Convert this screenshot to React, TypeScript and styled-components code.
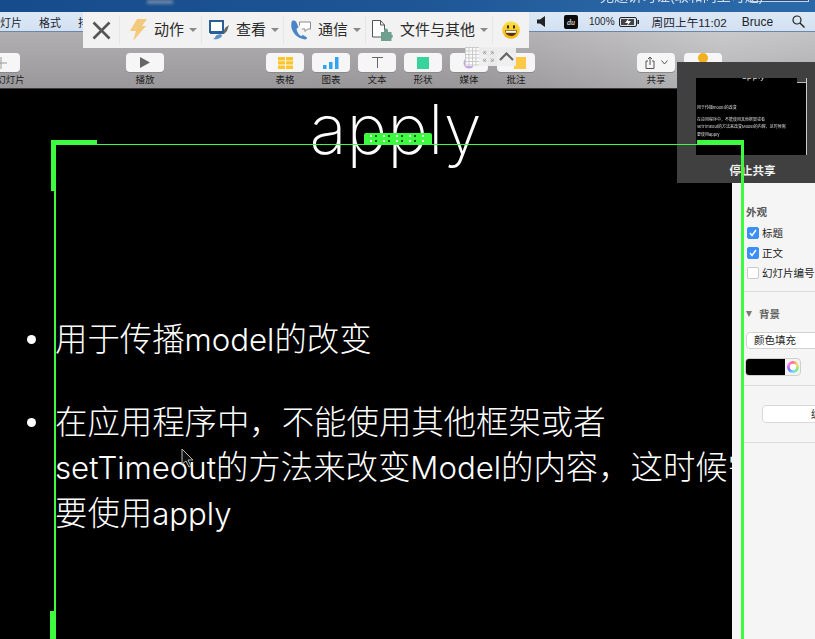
import React from "react";
import styled, { createGlobalStyle } from "styled-components";

const CJK = `"Liberation Sans", "Noto Sans CJK SC", sans-serif`;
const LIGHT = `Inter, "Noto Sans CJK SC", sans-serif`;
const GREEN = "#3dfb3f";

const Global = createGlobalStyle`
  html, body { margin: 0; padding: 0; background: #000; }
  #root { width: 815px; height: 639px; }
`;

const Screen = styled.div`
  position: relative;
  width: 815px;
  height: 639px;
  overflow: hidden;
  display: flex;
  flex-direction: column;
  font-family: ${CJK};
  background: #000;
`;

const TitleBar = styled.div`
  height: 12px;
  flex: none;
  background: linear-gradient(90deg, #174c8c 0%, #1d5595 50%, #2a66a5 80%, #2a68a8 100%);
  display: flex;
  align-items: flex-start;
  overflow: hidden;
`;
const TitleGlow = styled.div`
  width: 26px;
  height: 4px;
  margin-left: 147px;
  background: #6f86a6;
  filter: blur(1.5px);
  flex: none;
`;
const TitleText = styled.div`
  font-size: 14px;
  line-height: 14px;
  margin: -11px 0 0 427px;
  color: #d5dfeb;
  filter: blur(0.4px);
  white-space: nowrap;
  flex: none;
  width: 140px;
`;
const SearchEdge = styled.div`
  width: 59px;
  height: 2px;
  margin-left: 10px;
  box-sizing: border-box;
  border: 1px solid #c9d4e2;
  border-top: 0;
  background: #1f4f85;
  flex: none;
`;

const MenuBar = styled.div`
  height: 20px;
  flex: none;
  background: linear-gradient(180deg, #dce8f5, #d2e1f2);
  border-bottom: 1px solid #6d85a6;
  box-sizing: border-box;
  display: flex;
  align-items: center;
  color: #1d2530;
`;
const MenuItem = styled.span<{ $ml?: number; $size?: number }>`
  margin-left: ${(p) => p.$ml ?? 0}px;
  white-space: nowrap;
  font-size: ${(p) => p.$size ?? 11}px;
`;

const Toolbar = styled.div`
  height: 57px;
  flex: none;
  box-sizing: border-box;
  background: linear-gradient(180deg, rgba(255, 255, 255, 0.09), rgba(0, 0, 0, 0.09)),
    linear-gradient(100deg, #a9a7a9 0%, #a8a6a8 60%, #c4c3c5 88%, #bdbcbe 100%);
  border-bottom: 1px solid #3c3c3c;
  padding-top: 21px;
  display: flex;
  align-items: flex-start;
`;
const ToolItem = styled.div<{ $ml: number }>`
  width: 38px;
  flex: none;
  margin-left: ${(p) => p.$ml}px;
  display: flex;
  flex-direction: column;
  align-items: center;
`;
const ToolButton = styled.div`
  width: 38px;
  height: 19px;
  border-radius: 4px;
  background: #f6f6f6;
  box-shadow: 0 1px 0 #8b8a8b;
  display: flex;
  align-items: center;
  justify-content: center;
  gap: 3px;
`;
const ToolLabel = styled.div`
  font-size: 9.5px;
  line-height: 10px;
  margin-top: 3px;
  color: #1c1c1c;
  white-space: nowrap;
`;

const Main = styled.div`
  flex: 1;
  display: flex;
  min-height: 0;
`;
const Stage = styled.div`
  width: 732px;
  flex: none;
  background: #000;
  color: #fff;
  font-family: ${LIGHT};
  font-weight: 300;
  overflow: hidden;
`;
const SlideTitle = styled.h1`
  margin: 0;
  padding-left: 59px;
  text-align: center;
  font-size: 69px;
  line-height: 80px;
  font-weight: 200;
  height: 80px;
`;
const Bullets = styled.ul`
  list-style: none;
  margin: 148px 0 0;
  padding: 0 0 0 24px;
`;
const Bullet = styled.li`
  position: relative;
  padding-left: 31px;
  font-size: 32.4px;
  line-height: 45px;
  margin-bottom: 37px;
  width: 720px;
  white-space: nowrap;
  &::before {
    content: "";
    display: block;
    position: absolute;
    left: 3px;
    top: 18px;
    width: 9px;
    height: 9px;
    border-radius: 50%;
    background: #fff;
  }
`;
const Latin = styled.span`
  font-size: 31.2px;
`;

const Panel = styled.aside`
  flex: 1;
  background: #f5f5f5;
  padding-top: 116px;
  font-size: 10.5px;
  color: #222;
  overflow: hidden;
  white-space: nowrap;
`;
const PanelHeading = styled.div`
  margin-left: 14px;
  font-weight: 700;
  color: #555;
  line-height: 14px;
`;
const CheckRow = styled.div<{ $mt: number }>`
  display: flex;
  align-items: center;
  gap: 3px;
  margin: ${(p) => p.$mt}px 0 0 15px;
  height: 13px;
`;
const Check = styled.span<{ $on?: boolean }>`
  width: 12px;
  height: 12px;
  flex: none;
  box-sizing: border-box;
  border-radius: 2px;
  background: ${(p) => (p.$on ? "#3b8ff5" : "#fff")};
  border: 1px solid ${(p) => (p.$on ? "#3b8ff5" : "#c9c9c9")};
  display: flex;
`;
const Divider = styled.div<{ $mt: number }>`
  height: 1px;
  background: #dcdcdc;
  margin: ${(p) => p.$mt}px 0 0 11px;
`;
const SectionHead = styled.div`
  display: flex;
  align-items: center;
  gap: 7px;
  margin: 15px 0 0 14px;
  font-weight: 700;
  color: #666;
  line-height: 14px;
`;
const Triangle = styled.span`
  width: 0;
  height: 0;
  border-left: 3.5px solid transparent;
  border-right: 3.5px solid transparent;
  border-top: 6px solid #777;
`;
const SelectBox = styled.div`
  box-sizing: border-box;
  height: 17px;
  margin: 11px -6px 0 14px;
  border: 1px solid #d2d2d2;
  border-radius: 4px;
  background: #fff;
  padding-left: 7px;
  line-height: 15px;
`;
const Well = styled.div`
  box-sizing: border-box;
  width: 56px;
  height: 18px;
  margin: 9px 0 0 13px;
  border: 1px solid #cfcfcf;
  border-radius: 4px;
  background: #f3f3f3;
  display: flex;
  align-items: center;
  overflow: hidden;
`;
const WellColor = styled.span`
  width: 40px;
  height: 18px;
  margin-left: -1px;
  background: #000;
  flex: none;
`;
const Wheel = styled.span`
  width: 12px;
  height: 12px;
  margin-left: 2px;
  box-sizing: border-box;
  border-radius: 50%;
  background: radial-gradient(circle, #fff 0 38%, transparent 42%),
    conic-gradient(#f77, #fd7, #7e7, #7df, #77f, #f7f, #f77);
`;
const WideButton = styled.div`
  box-sizing: border-box;
  height: 18px;
  margin: 19px -6px 0 30px;
  border: 1px solid #d8d8d8;
  border-radius: 4px;
  background: #fff;
  padding-left: 48px;
  line-height: 16px;
`;

/* Overlays */
const ConfBar = styled.div`
  position: absolute;
  left: 83px;
  top: 12px;
  width: 446px;
  height: 36px;
  background: #f2f2f2;
  display: flex;
  align-items: center;
  z-index: 5;
`;
const ConfCell = styled.div<{ $w: number; $pl: number }>`
  width: ${(p) => p.$w}px;
  height: 100%;
  flex: none;
  box-sizing: border-box;
  padding-left: ${(p) => p.$pl}px;
  display: flex;
  align-items: center;
  gap: 6px;
  position: relative;
  &:not(:last-child)::after {
    content: "";
    position: absolute;
    right: 0;
    top: 4px;
    bottom: 4px;
    width: 1px;
    background: #e6e6e6;
  }
`;
const ConfText = styled.span`
  font-size: 15px;
  margin-bottom: 3px;
  color: #2b2b2b;
  white-space: nowrap;
`;
const Caret = styled.span`
  width: 0;
  height: 0;
  margin-left: -1px;
  border-left: 4px solid transparent;
  border-right: 4px solid transparent;
  border-top: 4px solid #8a8a8a;
`;
const MiniBar = styled.div`
  position: absolute;
  left: 465px;
  top: 47px;
  width: 51px;
  height: 19px;
  background: rgba(238, 238, 238, 0.95);
  display: flex;
  align-items: center;
  z-index: 6;
`;
const GridHandle = styled.div`
  width: 14px;
  height: 19px;
  flex: none;
  background-color: #fafafa;
  background-image: linear-gradient(90deg, #c8c8c8 1px, transparent 1px),
    linear-gradient(#c8c8c8 1px, transparent 1px);
  background-size: 3.5px 3.5px;
`;
const ShareWin = styled.div`
  position: absolute;
  left: 677px;
  top: 62px;
  width: 138px;
  height: 121px;
  background: #404040;
  box-sizing: border-box;
  padding: 16px 0 0 19px;
  z-index: 3;
`;
const Preview = styled.div`
  width: 111px;
  height: 77px;
  background: #000;
  color: #ddd;
  font-family: ${LIGHT};
  font-size: 4px;
  line-height: 7.5px;
  position: relative;
  overflow: hidden;
  border-right: 1px solid #ccc;
  box-sizing: border-box;
`;
const PreviewTitle = styled.div`
  text-align: center;
  font-size: 9px;
  line-height: 8px;
  margin-top: -6px;
  padding-left: 5px;
`;
const PreviewLine = styled.div<{ $mt?: number }>`
  padding-left: 1px;
  margin-top: ${(p) => p.$mt ?? 0}px;
  white-space: nowrap;
  filter: blur(0.25px);
`;
const PreviewNotch = styled.div`
  position: absolute;
  right: -1px;
  top: 0;
  width: 10px;
  height: 5px;
  background: #404040;
  border-bottom: 1px solid #bbb;
  box-sizing: border-box;
`;
const StopLabel = styled.div`
  margin: 9px 0 0 -19px;
  text-align: center;
  padding-left: 13px;
  color: #f0f0f0;
  font-size: 11.5px;
  font-weight: 700;
  line-height: 14px;
`;

const GreenBar = styled.div<{ $l: number; $t: number; $w: number; $h: number }>`
  position: absolute;
  left: ${(p) => p.$l}px;
  top: ${(p) => p.$t}px;
  width: ${(p) => p.$w}px;
  height: ${(p) => p.$h}px;
  background: ${GREEN};
  z-index: 4;
`;
const Grip = styled.div`
  position: absolute;
  left: 364px;
  top: 133px;
  width: 68px;
  height: 12px;
  border-radius: 2px 2px 0 0;
  background: ${GREEN};
  display: flex;
  align-items: center;
  justify-content: center;
  z-index: 4;
`;
const Cursor = styled.svg`
  position: absolute;
  left: 181px;
  top: 448px;
  z-index: 6;
`;

const Lightning = () => (
  <svg width="19" height="22" viewBox="0 0 19 22">
    <path d="M8 0h10l-5 7h4L4 22l3-10H1z" fill="#f3c97c" />
  </svg>
);
const Monitor = () => (
  <svg width="21" height="20" viewBox="0 0 21 20">
    <rect x="1" y="1" width="13" height="11" fill="#fff" stroke="#2a5f97" strokeWidth="2" />
    <path d="M1 12h14v2H1z" fill="#2a5f97" />
    <path d="M4 19c2 0 2-3 4-4 2-1 4-1 5 0 0 3-5 5-9 4z" fill="#5b8fc6" />
    <path d="M14 13l2-5 4-3-2 6-3 3z" fill="#666" />
  </svg>
);
const Phone = () => (
  <svg width="22" height="20" viewBox="0 0 22 20">
    <path d="M2 1C-1 9 5 18 15 19.500c1.500 0 2-1 2-2l-4-2.500-2 1c-2-1-4-4-4.500-7L8.500 7 6 1.500C5 .500 3 .300 2 1z" fill="#4a86c5" />
    <path d="M9.500 5.500V2h11v7h-3l-2.500 2.500V9H12" fill="#fff" stroke="#8a8a8a" />
  </svg>
);
const FileIcon = () => (
  <svg width="22" height="21" viewBox="0 0 22 21">
    <path d="M.5.500h8l4 4.500v12H.500z" fill="#fff" stroke="#555" />
    <path d="M8.500.500V5h4" fill="none" stroke="#555" />
    <path d="M9 12h3v-1.500a2 2 0 0 1 4 0V12h3.500v2.500a1.800 1.800 0 0 1 0 3.500V21H9z" fill="#6f9f8d" />
  </svg>
);
const Smiley = () => (
  <svg width="18" height="18" viewBox="0 0 18 18" style={{ marginLeft: -1 }}>
    <defs>
      <linearGradient id="smile" x1="0" y1="0" x2="0" y2="1">
        <stop offset="0" stopColor="#fde24a" />
        <stop offset="1" stopColor="#f5b50f" />
      </linearGradient>
    </defs>
    <circle cx="9" cy="9" r="8.800" fill="url(#smile)" />
    <ellipse cx="6" cy="5.800" rx="1.100" ry="1.900" fill="#3a2a10" />
    <ellipse cx="12" cy="5.800" rx="1.100" ry="1.900" fill="#3a2a10" />
    <path d="M3 9.500h12c0 3.500-3 5.500-6 5.500s-6-2-6-5.500z" fill="#5a3510" />
    <path d="M3.800 10h10.400v1.800H3.800z" fill="#fff" />
  </svg>
);
const TableGlyph = () => (
  <svg width="15" height="12" viewBox="0 0 15 12">
    <path d="M0 0h7v3.400H0zM8 0h7v3.400H8zM0 4.200h7v3.400H0zM8 4.200h7v3.400H8zM0 8.400h7V12H0zM8 8.400h7V12H8z" fill="#fdc52c" />
  </svg>
);
const ChartGlyph = () => (
  <svg width="16" height="12" viewBox="0 0 16 12">
    <path d="M0 8h3.500v4H0zM6 5h3.500v7H6zM12 0h3.500v12H12z" fill="#2fa4ef" />
  </svg>
);
const GripDots = () => (
  <svg width="56" height="8" viewBox="0 0 56 8">
    {[0, 5, 13, 18, 26, 31, 39, 44, 52].map((x) => (
      <g key={x}>
        <rect x={x} y="0" width="2" height="2" fill={x % 13 === 0 ? "#eaffea" : "#0d5a10"} />
        <rect x={x} y="5" width="2" height="2" fill={x % 13 === 0 ? "#eaffea" : "#0d5a10"} />
      </g>
    ))}
  </svg>
);
const Tick = () => (
  <svg width="10" height="10" viewBox="0 0 10 10">
    <path d="M2 5l2 2.500L8 2" fill="none" stroke="#fff" strokeWidth="1.400" />
  </svg>
);

export default function App() {
  return (
    <Screen>
      <Global />
      <TitleBar>
        <TitleGlow />
        <TitleText>无题讲习证(取和同上可题)</TitleText>
        <SearchEdge />
      </TitleBar>
      <MenuBar>
        <MenuItem>灯片</MenuItem>
        <MenuItem $ml={17}>格式</MenuItem>
        <MenuItem $ml={17}>排列</MenuItem>
        <svg width="8" height="11" viewBox="0 0 8 11" style={{ marginLeft: 437 }}>
          <path d="M0 3.500h3l5-3.500v11L3 7.500H0z" fill="#222" />
        </svg>
        <svg width="14" height="14" viewBox="0 0 14 14" style={{ marginLeft: 19 }}>
          <rect width="14" height="14" rx="2" fill="#0c0c0c" />
          <text x="7" y="10" fontSize="8" fill="#fff" textAnchor="middle" fontStyle="italic" fontFamily="Liberation Serif">du</text>
        </svg>
        <MenuItem $ml={11} $size={10}>100%</MenuItem>
        <svg width="20" height="10" viewBox="0 0 20 10" style={{ marginLeft: 4 }}>
          <rect x="0.500" y="0.500" width="17" height="9" rx="1.500" fill="none" stroke="#222" />
          <path d="M2 2h13v6H2z" fill="#444" />
          <path d="M10 1L6 6h3L8 9l4-5H9z" fill="#fff" />
          <rect x="18.500" y="3" width="1.500" height="4" fill="#222" />
        </svg>
        <MenuItem $ml={13} $size={11.700}>周四上午11:02</MenuItem>
        <MenuItem $ml={15} $size={12}>Bruce</MenuItem>
        <svg width="13" height="13" viewBox="0 0 13 13" style={{ marginLeft: 19 }}>
          <circle cx="5" cy="5" r="4" fill="none" stroke="#222" strokeWidth="1.200" />
          <path d="M8 8l4.500 4.500" stroke="#222" strokeWidth="1.400" />
        </svg>
      </MenuBar>
      <Toolbar>
        <ToolItem $ml={-18}>
          <ToolButton>
            <svg width="12" height="12" viewBox="0 0 12 12">
              <path d="M5.500 0h1v5.500H12v1H6.500V12h-1V6.500H0v-1h5.500z" fill="#999" />
            </svg>
          </ToolButton>
          <ToolLabel>添加幻灯片</ToolLabel>
        </ToolItem>
        <ToolItem $ml={106}>
          <ToolButton>
            <svg width="10" height="11" viewBox="0 0 10 11">
              <path d="M0 0l10 5.500L0 11z" fill="#666" />
            </svg>
          </ToolButton>
          <ToolLabel>播放</ToolLabel>
        </ToolItem>
        <ToolItem $ml={102}>
          <ToolButton><TableGlyph /></ToolButton>
          <ToolLabel>表格</ToolLabel>
        </ToolItem>
        <ToolItem $ml={8}>
          <ToolButton><ChartGlyph /></ToolButton>
          <ToolLabel>图表</ToolLabel>
        </ToolItem>
        <ToolItem $ml={8}>
          <ToolButton>
            <svg width="11" height="11" viewBox="0 0 11 11">
              <path d="M0 0h11v1H6v10H5V1H0z" fill="#666" />
            </svg>
          </ToolButton>
          <ToolLabel>文本</ToolLabel>
        </ToolItem>
        <ToolItem $ml={8}>
          <ToolButton>
            <svg width="12" height="12" viewBox="0 0 12 12"><rect width="12" height="12" fill="#37d39c" /></svg>
          </ToolButton>
          <ToolLabel>形状</ToolLabel>
        </ToolItem>
        <ToolItem $ml={8}>
          <ToolButton>
            <svg width="12" height="12" viewBox="0 0 12 12"><circle cx="6" cy="6" r="5.500" fill="#c9a6e8" /></svg>
          </ToolButton>
          <ToolLabel>媒体</ToolLabel>
        </ToolItem>
        <ToolItem $ml={9}>
          <ToolButton>
            <svg width="12" height="12" viewBox="0 0 12 12" style={{ marginLeft: 8 }}><rect width="12" height="12" fill="#fbc945" /></svg>
          </ToolButton>
          <ToolLabel>批注</ToolLabel>
        </ToolItem>
        <ToolItem $ml={102}>
          <ToolButton>
            <svg width="10" height="13" viewBox="0 0 10 13">
              <path d="M3 5H1v7.500h8V5H7M5 9V1M3 3l2-2 2 2" fill="none" stroke="#555" />
            </svg>
            <svg width="7" height="5" viewBox="0 0 7 5" style={{ marginLeft: 3 }}>
              <path d="M.5.500L3.500 4 6.500.500" fill="none" stroke="#555" />
            </svg>
          </ToolButton>
          <ToolLabel>共享</ToolLabel>
        </ToolItem>
        <ToolItem $ml={9}>
          <ToolButton>
            <svg width="10" height="10" viewBox="0 0 10 10" style={{ marginTop: -9 }}><circle cx="5" cy="5" r="5" fill="#f2b01e" /></svg>
          </ToolButton>
        </ToolItem>
      </Toolbar>
      <Main>
        <Stage>
          <SlideTitle>apply</SlideTitle>
          <Bullets>
            <Bullet>用于传播<Latin>model</Latin>的改变</Bullet>
            <Bullet>
              在应用程序中，不能使用其他框架或者
              <br />
              <Latin>setTimeout</Latin>的方法来改变<Latin>Model</Latin>的内容，这时候需
              <br />
              要使用<Latin>apply</Latin>
            </Bullet>
          </Bullets>
        </Stage>
        <Panel>
          <PanelHeading>外观</PanelHeading>
          <CheckRow $mt={7}>
            <Check $on><Tick /></Check>
            标题
          </CheckRow>
          <CheckRow $mt={7}>
            <Check $on><Tick /></Check>
            正文
          </CheckRow>
          <CheckRow $mt={7}>
            <Check />
            幻灯片编号
          </CheckRow>
          <Divider $mt={12} />
          <SectionHead>
            <Triangle />
            背景
          </SectionHead>
          <SelectBox>颜色填充</SelectBox>
          <Well>
            <WellColor />
            <Wheel />
          </Well>
          <Divider $mt={9} />
          <WideButton>编辑</WideButton>
          <Divider $mt={19} />
        </Panel>
      </Main>

      <ConfBar>
        <ConfCell $w={37} $pl={9}>
          <svg width="19" height="19" viewBox="0 0 19 19">
            <path d="M1.500 1.500l16 16M17.500 1.500l-16 16" stroke="#555" strokeWidth="2.600" />
          </svg>
        </ConfCell>
        <ConfCell $w={82} $pl={9}>
          <Lightning />
          <ConfText>动作</ConfText>
          <Caret />
        </ConfCell>
        <ConfCell $w={82} $pl={7}>
          <Monitor />
          <ConfText>查看</ConfText>
          <Caret />
        </ConfCell>
        <ConfCell $w={82} $pl={6}>
          <Phone />
          <ConfText>通信</ConfText>
          <Caret />
        </ConfCell>
        <ConfCell $w={127} $pl={6}>
          <FileIcon />
          <ConfText>文件与其他</ConfText>
          <Caret />
        </ConfCell>
        <ConfCell $w={36} $pl={10}>
          <Smiley />
        </ConfCell>
      </ConfBar>
      <MiniBar>
        <GridHandle />
        <svg width="11" height="11" viewBox="0 0 13 13" style={{ marginLeft: 4 }}>
          <path d="M1 4V1h3M9 1h3v3M12 9v3H9M4 12H1V9M1 1l3 3M12 1L9 4M12 12L9 9M1 12l3-3" fill="none" stroke="#999" />
        </svg>
        <svg width="15" height="9" viewBox="0 0 15 9" style={{ marginLeft: 5 }}>
          <path d="M1 8l6.500-6.500L14 8" fill="none" stroke="#666" strokeWidth="2.200" />
        </svg>
      </MiniBar>
      <ShareWin>
        <Preview>
          <PreviewTitle>apply</PreviewTitle>
          <PreviewLine $mt={24}>用于传播model的改变</PreviewLine>
          <PreviewLine $mt={4}>在应用程序中，不能使用其他框架或者</PreviewLine>
          <PreviewLine>setTimeout的方法来改变Model的内容，这时候需</PreviewLine>
          <PreviewLine>要使用apply</PreviewLine>
          <PreviewNotch />
        </Preview>
        <StopLabel>停止共享</StopLabel>
      </ShareWin>

      <GreenBar $l={54} $t={144} $w={689} $h={1} />
      <GreenBar $l={51} $t={140} $w={46} $h={5} />
      <GreenBar $l={697} $t={140} $w={46} $h={5} />
      <GreenBar $l={51} $t={140} $w={4} $h={51} />
      <GreenBar $l={54} $t={140} $w={2} $h={499} />
      <GreenBar $l={50} $t={611} $w={5} $h={28} />
      <GreenBar $l={741} $t={140} $w={3} $h={499} />
      <Grip><GripDots /></Grip>
      <Cursor width="13" height="20" viewBox="0 0 13 20">
        <path d="M1 1v15l4-3 3 6 2-1-3-6h5z" fill="#111" stroke="#bbb" />
      </Cursor>
    </Screen>
  );
}
